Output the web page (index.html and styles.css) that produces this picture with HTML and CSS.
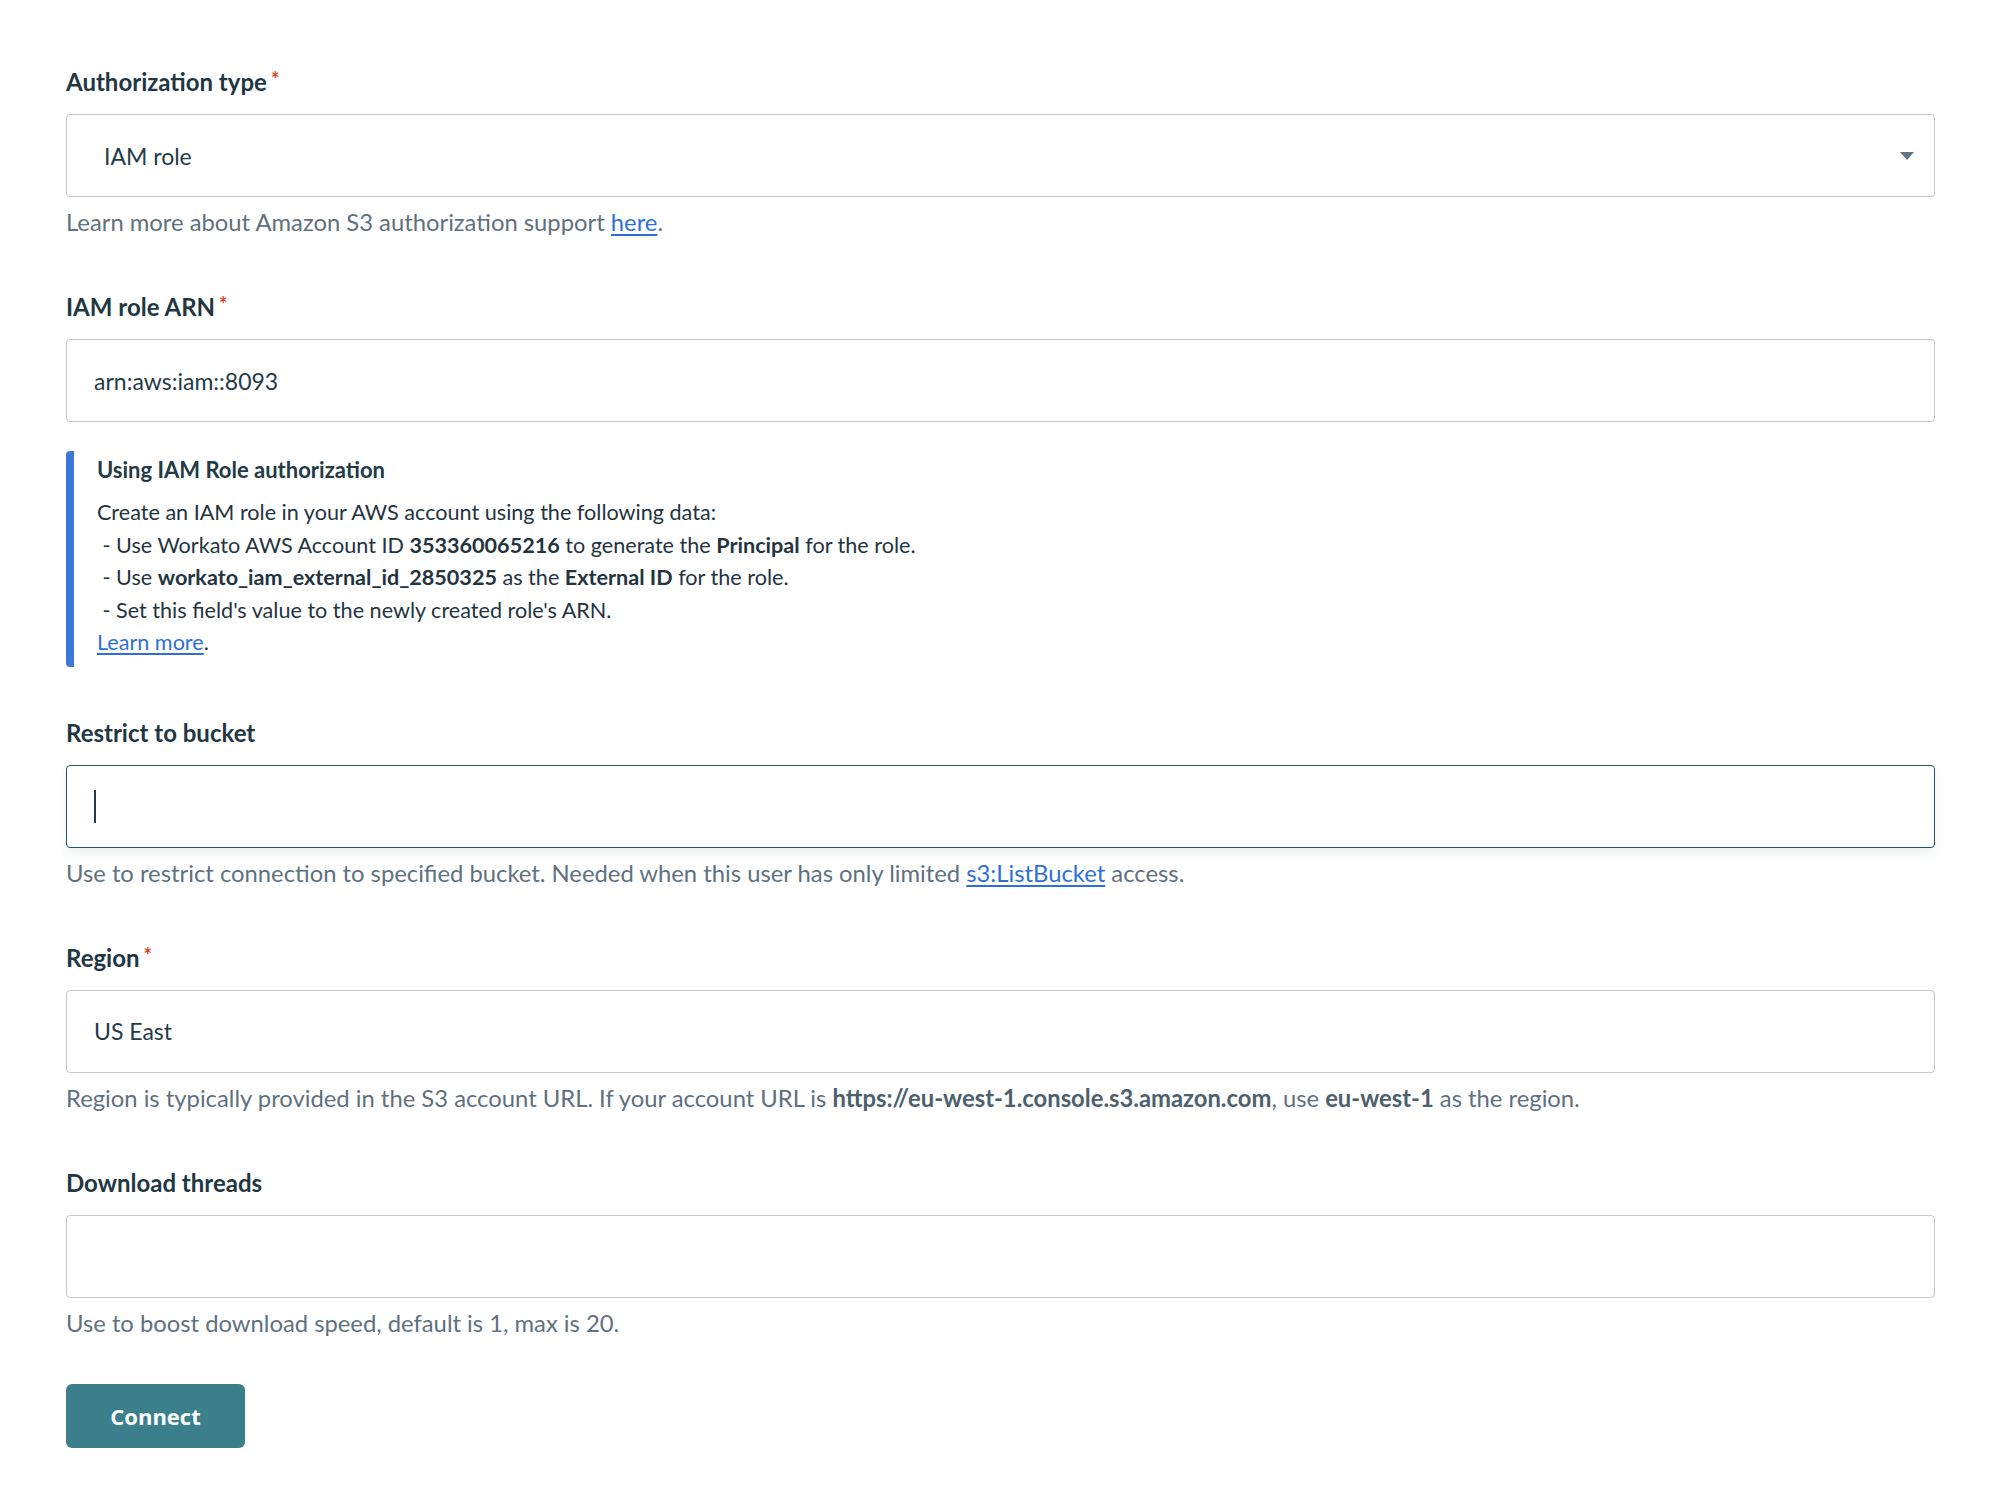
FILE: index.html
```html
<!DOCTYPE html>
<html lang="en">
<head>
<meta charset="utf-8">
<title>Amazon S3 connection</title>
<link rel="stylesheet" href="styles.css">
</head>
<body>
<form class="conn-form">
  <div class="field">
    <div class="field-label">Authorization type<span class="req">*</span></div>
    <div class="control select">
      <span class="select-value">IAM role</span>
      <svg class="caret-down" width="14" height="8" viewBox="0 0 14 8"><path d="M0 0h14L7 8z" fill="#5f7482"/></svg>
    </div>
    <div class="hint">Learn more about Amazon S3 authorization support <a href="#">here</a>.</div>
  </div>

  <div class="field">
    <div class="field-label">IAM role ARN<span class="req">*</span></div>
    <div class="control"><span class="value clipped">arn:aws:iam::8093</span></div>
  </div>

  <div class="note">
    <div class="note-title">Using IAM Role authorization</div>
    <div class="note-body">
      <p>Create an IAM role in your AWS account using the following data:</p>
      <p>&nbsp;- Use Workato AWS Account ID <b>353360065216</b> to generate the <b>Principal</b> for the role.</p>
      <p>&nbsp;- Use <b>workato_iam_external_id_2850325</b> as the <b>External ID</b> for the role.</p>
      <p>&nbsp;- Set this field's value to the newly created role's ARN.</p>
      <p><a href="#">Learn more</a>.</p>
    </div>
  </div>

  <div class="field">
    <div class="field-label">Restrict to bucket</div>
    <div class="control focused"><span class="text-caret"></span></div>
    <div class="hint">Use to restrict connection to specified bucket. Needed when this user has only limited <a href="#">s3:ListBucket</a> access.</div>
  </div>

  <div class="field">
    <div class="field-label">Region<span class="req">*</span></div>
    <div class="control"><span class="value">US East</span></div>
    <div class="hint">Region is typically provided in the S3 account URL. If your account URL is <b>https://eu-west-1.console.s3.amazon.com</b>, use <b>eu-west-1</b> as the region.</div>
  </div>

  <div class="field">
    <div class="field-label">Download threads</div>
    <div class="control"></div>
    <div class="hint">Use to boost download speed, default is 1, max is 20.</div>
  </div>

  <div class="actions">
    <button type="button" class="btn-connect">Connect</button>
  </div>
</form>
</body>
</html>
```

FILE: styles.css
```css
html, body {
  margin: 0;
  padding: 0;
  background: #ffffff;
}

body {
  font-family: Lato, "Noto Sans", "Liberation Sans", sans-serif;
  color: #223a47;
}

.conn-form {
  padding: 67px 57px 60px 66px;
  display: flex;
  flex-direction: column;
}

.field {
  display: flex;
  flex-direction: column;
  margin-bottom: 55px;
}

.field-label {
  height: 30px;
  font-size: 24px;
  line-height: 30px;
  font-weight: 700;
  color: #1f3744;
  margin-bottom: 17px;
  white-space: nowrap;
}

/* required marker sits raised without growing the line box */
.req {
  display: inline-block;
  line-height: 0;
  color: #d2472a;
  font-weight: 700;
  margin-left: 4px;
  font-size: 20px;
  position: relative;
  top: -4px;
}

.control {
  box-sizing: border-box;
  height: 83px;
  border: 1px solid #c2c9cf;
  border-radius: 4px;
  background: #fff;
  display: flex;
  align-items: center;
  padding: 0 27px;
  font-size: 23px;
  color: #233b48;
}

.control.select {
  padding: 0 20px 0 37px;
  justify-content: space-between;
}

.clipped {
  display: inline-block;
  width: 188px;
  overflow: hidden;
  white-space: nowrap;
}

.control.focused {
  border-color: #1f5763;
  box-shadow: 0 5px 10px rgba(30, 60, 70, 0.08);
}

.text-caret {
  display: block;
  width: 2px;
  height: 33px;
  background: #233b48;
}

.hint {
  margin-top: 10px;
  font-size: 23.8px;
  line-height: 30px;
  color: #5f7180;
  white-space: nowrap;
}

.hint b {
  font-weight: 700;
  color: #4d606e;
}

a {
  color: #2e6fd8;
  text-decoration: underline;
  text-underline-offset: 3px;
}

.note {
  margin-top: -26px;
  margin-bottom: 51px;
  border-left: 8px solid #3b78da;
  border-radius: 4px;
  padding: 4px 0 8px 23px;
}

.note-title {
  font-size: 22px;
  line-height: 30px;
  font-weight: 700;
  color: #233a47;
  margin-bottom: 11px;
}

.note-body {
  font-size: 21.6px;
  line-height: 32.5px;
  color: #24343f;
  white-space: nowrap;
}

.note-body p {
  margin: 0;
}

.note-body b {
  font-weight: 700;
}

.actions {
  margin-top: -9px;
}

.btn-connect {
  width: 179px;
  height: 64px;
  border: none;
  border-radius: 6px;
  background: #3b7f8c;
  color: #ffffff;
  font-family: "Open Sans", "Noto Sans", sans-serif;
  font-weight: 700;
  font-size: 22px;
  cursor: pointer;
}
```
